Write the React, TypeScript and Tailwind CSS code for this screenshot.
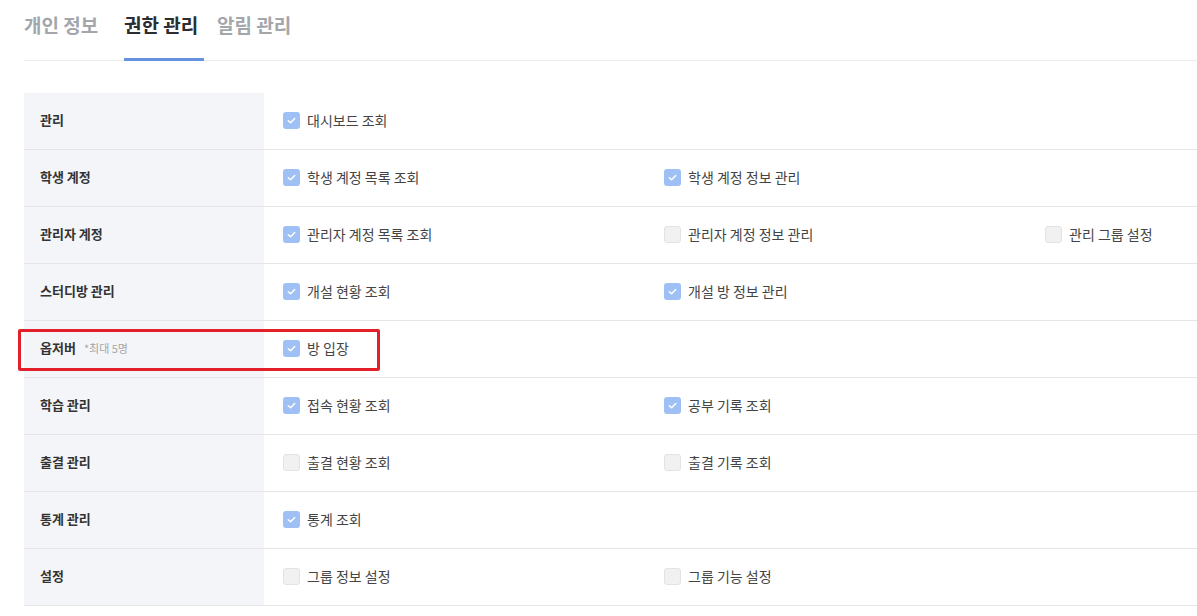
import React from "react";

type Item = { label: string; checked: boolean };
type Row = { title: string; note?: string; items: Item[]; highlight?: boolean };

const rows: Row[] = [
  { title: "관리", items: [{ label: "대시보드 조회", checked: true }] },
  {
    title: "학생 계정",
    items: [
      { label: "학생 계정 목록 조회", checked: true },
      { label: "학생 계정 정보 관리", checked: true },
    ],
  },
  {
    title: "관리자 계정",
    items: [
      { label: "관리자 계정 목록 조회", checked: true },
      { label: "관리자 계정 정보 관리", checked: false },
      { label: "관리 그룹 설정", checked: false },
    ],
  },
  {
    title: "스터디방 관리",
    items: [
      { label: "개설 현황 조회", checked: true },
      { label: "개설 방 정보 관리", checked: true },
    ],
  },
  { title: "옵저버", note: "*최대 5명", items: [{ label: "방 입장", checked: true }], highlight: true },
  {
    title: "학습 관리",
    items: [
      { label: "접속 현황 조회", checked: true },
      { label: "공부 기록 조회", checked: true },
    ],
  },
  {
    title: "출결 관리",
    items: [
      { label: "출결 현황 조회", checked: false },
      { label: "출결 기록 조회", checked: false },
    ],
  },
  { title: "통계 관리", items: [{ label: "통계 조회", checked: true }] },
  {
    title: "설정",
    items: [
      { label: "그룹 정보 설정", checked: false },
      { label: "그룹 기능 설정", checked: false },
    ],
  },
];

function Check({ checked }: { checked: boolean }) {
  if (checked) {
    return (
      <span className="flex h-[17px] w-[17px] shrink-0 items-center justify-center rounded-[3px] bg-[#9fc0f4]">
        <svg width="11" height="11" viewBox="0 0 12 12" fill="none">
          <path d="M2.5 6.2 L5 8.4 L9.5 3.8" stroke="white" strokeWidth="1.6" strokeLinecap="round" strokeLinejoin="round" />
        </svg>
      </span>
    );
  }
  return <span className="h-[17px] w-[17px] shrink-0 rounded-[3px] border border-[#e3e3e3] bg-[#f1f1f1]" />;
}

export default function App() {
  return (
    <div
      className="min-h-[616px] w-[1197px] overflow-hidden bg-white pl-6"
      style={{ fontFamily: '"Noto Sans CJK KR", "Noto Sans", sans-serif' }}
    >
      <div className="flex h-[61px] items-stretch border-b border-[#ececec]">
        <div className="flex w-[100px] items-center pb-[10px] text-[19px] font-bold text-[#a3a6ab]">개인 정보</div>
        <div className="relative flex w-[93px] items-center pb-[10px] text-[19px] font-bold text-[#2b2d31]">
          권한 관리
          <span className="absolute bottom-[-1px] left-0 h-[3px] w-[80px] bg-[#6690e0]" />
        </div>
        <div className="flex items-center pb-[10px] text-[19px] font-bold text-[#a3a6ab]">알림 관리</div>
      </div>

      <div className="mt-8">
        {rows.map((row) => (
          <div key={row.title} className="relative flex h-[57px] border-b border-[#e6e6e6]">
            <div className="flex w-[240px] shrink-0 items-center gap-2 bg-[#f4f5f8] pb-[2px] pl-4 text-[13px] font-bold text-[#333]">
              {row.title}
              {row.note && <span className="text-[11px] font-normal text-[#a6a6a6]">{row.note}</span>}
            </div>
            <div className="flex items-center pb-[2px] pl-[19px]">
              {row.items.map((it, j) => (
                <div key={j} className="flex w-[381px] items-center gap-[7px] text-[14px] text-[#444]">
                  <Check checked={it.checked} />
                  <span>{it.label}</span>
                </div>
              ))}
            </div>
            {row.highlight && (
              <div className="pointer-events-none absolute left-[-6px] top-[8px] h-[42px] w-[362px] rounded-[2px] border-[3px] border-[#e3202a]" />
            )}
          </div>
        ))}
      </div>
    </div>
  );
}
